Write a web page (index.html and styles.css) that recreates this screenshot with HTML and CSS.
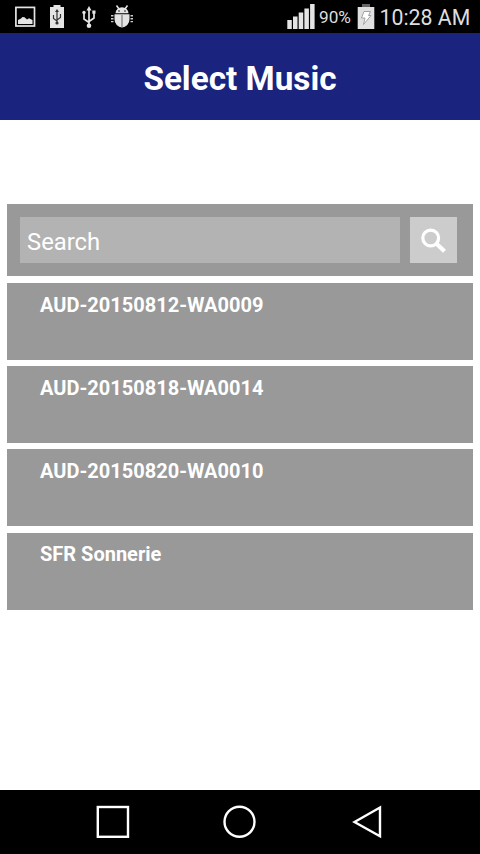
FILE: index.html
```html
<!DOCTYPE html>
<html lang="en">
<head>
<meta charset="utf-8">
<title>Select Music</title>
<link rel="stylesheet" href="styles.css">
</head>
<body>
<div class="screen">
  <div class="status">
    <svg class="notifications" viewBox="0 0 140 33" width="140" height="33">
      <rect x="15.9" y="7.4" width="18.6" height="18.6" fill="none" stroke="#e4e4e4" stroke-width="1.7"/>
      <path d="M18 24v-4l3-1.5 1.5-1.5 2 .3 2.5 2.2 2-1.2 3.5 1.7v4z" fill="#e4e4e4"/>
      <path d="M50 7h3.500V5h7v2H64v21H50z" fill="#e4e4e4"/>
      <path d="M57 11v13M57 21l-3.500-2.500V15M57 20l3.500-2.500V14" fill="none" stroke="#333" stroke-width="1.2"/>
      <path d="M57 9l2 3h-4z" fill="#333"/><circle cx="57" cy="23" r="1.6" fill="#333"/>
      <path d="M89 9v16M89 22.500l-5-3.500v-6M89 21.500l5-3.500v-6" fill="none" stroke="#e4e4e4" stroke-width="1.7"/>
      <path d="M89 6l2.500 4.500h-5z" fill="#e4e4e4"/>
      <circle cx="89" cy="25.700" r="2.300" fill="#e4e4e4"/><circle cx="84" cy="12.500" r="1.700" fill="#e4e4e4"/><path d="M92.300 10.500h3.200v3.200h-3.200z" fill="#e4e4e4"/>
      <path d="M115.500 13.300a6.500 6 0 0 1 13 0zM114.500 14.200h15v5a7.500 8.300 0 0 1-15 0z" fill="#e4e4e4"/>
      <path d="M116.500 5.500l2.500 3.500M127.500 5.500L125 9" stroke="#e4e4e4" stroke-width="1.500"/>
      <path d="M122 15v12.500" stroke="#777" stroke-width="1.200"/>
      <path d="M111 15.800h2.500M111 18.700h2.500M111 21.600h2.500M130.500 15.800h2.500M130.500 18.700h2.500M130.500 21.600h2.500" stroke="#ccc" stroke-width="1.400"/>
      <circle cx="119" cy="11" r=".8" fill="#111"/><circle cx="125" cy="11" r=".8" fill="#111"/>
    </svg>
    <svg class="signal" viewBox="0 0 30 33" width="30" height="33">
      <path d="M.3 20h4.500v9H.3zM6 16.500h4.500V29H6zM11.700 12.500h4.500V29h-4.500zM17.400 8.500h4.500V29h-4.500zM23.100 4h4.500v25h-4.500z" fill="#e4e4e4"/>
    </svg>
    <span class="percent">90%</span>
    <svg class="battery" viewBox="0 0 18 33" width="18" height="33">
      <path d="M5 4h8v3H5z" fill="#666"/><path d="M.7 7h16.600v22H.7z" fill="#e0e0e0"/>
      <path d="M7 11.500h6.500l-2 4h2.500l-7.500 9 1.500-6.500H4.500z" fill="#fff" stroke="#999" stroke-width=".9"/>
    </svg>
    <span class="clock">10:28 AM</span>
  </div>
  <header class="header"><h1 class="title">Select Music</h1></header>
  <main class="content">
    <form class="search">
      <div class="field">Search</div>
      <div class="go">
        <svg viewBox="0 0 47 46" width="47" height="46"><circle cx="20.700" cy="21" r="7.900" fill="none" stroke="#fff" stroke-width="3.200"/><path d="M26.500 26.800l8 7.500" stroke="#fff" stroke-width="4.200"/></svg>
      </div>
    </form>
    <div class="item">AUD-20150812-WA0009</div>
    <div class="item">AUD-20150818-WA0014</div>
    <div class="item">AUD-20150820-WA0010</div>
    <div class="item">SFR Sonnerie</div>
  </main>
  <nav class="nav">
    <svg viewBox="0 0 480 64" width="480" height="64" fill="none" stroke="#fff" stroke-width="2.400">
      <rect x="97.800" y="17" width="30.200" height="29.800"/>
      <circle cx="239.500" cy="31.800" r="15"/>
      <path d="M354.500 32L380 17.500v28.700z"/>
    </svg>
  </nav>
</div>
</body>
</html>
```
FILE: styles.css
```css
body {
  margin: 0;
  background: #fff;
  font-family: Roboto, "Liberation Sans", sans-serif;
}

svg {
  display: block;
}

.screen {
  display: flex;
  flex-direction: column;
  width: 480px;
  height: 854px;
  overflow: hidden;
}

.status {
  display: flex;
  align-items: center;
  height: 33px;
  background: #000;
  color: #dedede;
  white-space: nowrap;
}

.signal {
  margin-left: 147px;
}

.percent {
  width: 39.5px;
  padding: 2px 0 0 2px;
  box-sizing: border-box;
  font-size: 17.2px;
  line-height: 35px;
}

.battery {
  flex: none;
}

.clock {
  margin-left: 5px;
  padding-top: 2px;
  font-size: 21.3px;
  line-height: 35px;
}

.header {
  display: flex;
  align-items: center;
  justify-content: center;
  height: 87px;
  box-sizing: border-box;
  padding-top: 5px;
  background: #1a237e;
}

.title {
  margin: 0;
  color: #fff;
  font-size: 33.3px;
  font-weight: 700;
  line-height: 40px;
}

.content {
  display: flex;
  flex: 1;
  flex-direction: column;
  gap: 6.2px;
  padding: 84.3px 6.7px 0 7px;
}

.search {
  display: flex;
  gap: 10px;
  height: 72.1px;
  margin-bottom: 0.4px;
  box-sizing: border-box;
  padding: 13px 16px 13px 13px;
  background: #999;
}

.field {
  flex: 1;
  padding-left: 7px;
  background: #b3b3b3;
  color: #fff;
  font-size: 23.8px;
  line-height: 50px;
}

.go {
  width: 47px;
  background: #ccc;
}

.item {
  height: 77px;
  box-sizing: border-box;
  padding: 9.7px 33px;
  background: #999;
  color: #fff;
  font-size: 20px;
  font-weight: 700;
  line-height: 24px;
}

.nav {
  height: 64px;
  background: #000;
}
```
